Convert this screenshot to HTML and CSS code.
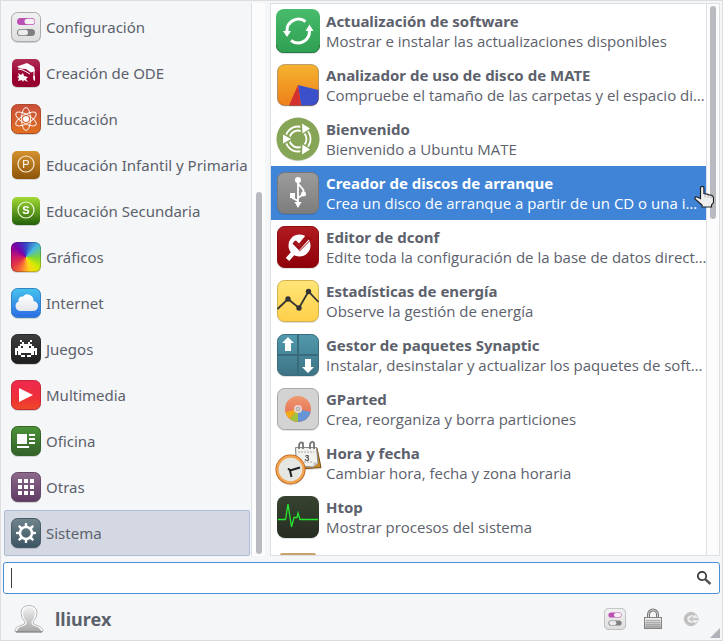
FILE: index.html
```html
<!DOCTYPE html>
<html lang="es">
  <head>
    <meta charset="utf-8" />
    <meta name="viewport" content="width=device-width, initial-scale=1" />
    <title>Menú de aplicaciones</title>
    <link rel="stylesheet" href="styles.css">
  </head>
  <body>
    <div class="menu">
      <!-- shared gradients -->
      <svg class="defs" width="0" height="0" aria-hidden="true">
        <defs>
          <linearGradient id="gGrey" x2="0" y2="1"><stop stop-color="#f1f1f1"/><stop offset="1" stop-color="#dedede"/></linearGradient>
          <linearGradient id="gWine" x2="0" y2="1"><stop stop-color="#b02e56"/><stop offset=".6" stop-color="#98012f"/><stop offset="1" stop-color="#96002d"/></linearGradient>
          <linearGradient id="gOrange" x2="0" y2="1"><stop stop-color="#c94f3c"/><stop offset="1" stop-color="#e0701f"/></linearGradient>
          <linearGradient id="gBrown" x2="0" y2="1"><stop stop-color="#d3912f"/><stop offset="1" stop-color="#8d5409"/></linearGradient>
          <linearGradient id="gLime" x2="0" y2="1"><stop stop-color="#a2da34"/><stop offset="1" stop-color="#22610a"/></linearGradient>
          <linearGradient id="gSky" x2="0" y2="1"><stop stop-color="#45c3ec"/><stop offset="1" stop-color="#2b6be4"/></linearGradient>
          <linearGradient id="gBlack" x2="0" y2="1"><stop stop-color="#3e3e3e"/><stop offset="1" stop-color="#1e1e1e"/></linearGradient>
          <linearGradient id="gRed" x2="0" y2="1"><stop stop-color="#ef284f"/><stop offset=".6" stop-color="#ee3038"/><stop offset="1" stop-color="#ef4a27"/></linearGradient>
          <linearGradient id="gGreen" x2="0" y2="1"><stop stop-color="#4b9338"/><stop offset="1" stop-color="#35602a"/></linearGradient>
          <linearGradient id="gPurple" x2="0" y2="1"><stop stop-color="#8d6b8b"/><stop offset="1" stop-color="#5f3a63"/></linearGradient>
          <linearGradient id="gSlate" x2="0" y2="1"><stop stop-color="#6f838c"/><stop offset="1" stop-color="#3c5563"/></linearGradient>
          <linearGradient id="gUpdate" x2="0" y2="1"><stop stop-color="#48bb6c"/><stop offset="1" stop-color="#2f9f52"/></linearGradient>
          <linearGradient id="gAmber" x2="0" y2="1"><stop stop-color="#f5b32f"/><stop offset="1" stop-color="#ee801a"/></linearGradient>
          <linearGradient id="gUsb" x2="0" y2="1"><stop stop-color="#9c9c9c"/><stop offset="1" stop-color="#7d7d7d"/></linearGradient>
          <linearGradient id="gDconf" x2="0" y2="1"><stop stop-color="#b01b20"/><stop offset="1" stop-color="#8e0008"/></linearGradient>
          <linearGradient id="gYellow" x2="0" y2="1"><stop stop-color="#ffe577"/><stop offset="1" stop-color="#ffcf4a"/></linearGradient>
          <linearGradient id="gTeal" x2="0" y2="1"><stop stop-color="#5199ae"/><stop offset="1" stop-color="#3d7384"/></linearGradient>
          <linearGradient id="gHtop" x2="0" y2="1"><stop stop-color="#37432f"/><stop offset="1" stop-color="#252d21"/></linearGradient>
          <linearGradient id="gCloud" x2="0" y2="1"><stop stop-color="#ffffff"/><stop offset="1" stop-color="#e4e6ea"/></linearGradient>
          <linearGradient id="gMetal" x2="0" y2="1"><stop stop-color="#f2f2f2"/><stop offset="1" stop-color="#a8a8a8"/></linearGradient>
          <linearGradient id="gDisc" x2="0" y2="1"><stop stop-color="#ef9a6e"/><stop offset="1" stop-color="#e2604f"/></linearGradient>
          <symbol id="toggles" viewBox="0 0 30 30">
            <rect x=".5" y=".5" width="29" height="29" rx="6" fill="url(#gGrey)" stroke="#aaa"/>
            <rect x="6" y="6" width="18" height="7" rx="3.5" fill="#bb4fb4"/>
            <rect x="13.5" y="6.8" width="10" height="5.5" rx="2.75" fill="#f4f0f4"/>
            <rect x="6" y="17" width="18" height="7" rx="3.5" fill="#7f7f7f"/>
            <rect x="7" y="17.8" width="10" height="5.5" rx="2.75" fill="#ececec"/>
          </symbol>
        </defs>
      </svg>

      <div class="panels">
        <nav class="categories">
          <button class="category">
            <svg class="category-icon"><use href="#toggles"/></svg>
            Configuración
          </button>
          <button class="category">
            <svg class="category-icon" viewBox="0 0 30 30">
              <rect x="1" y="1" width="28" height="28" rx="5" fill="url(#gWine)"/>
              <path d="M6 8.500 16 5 23 9 24 13 20 14.500 15 11 9 10.500Z" fill="#fff"/>
              <path d="M7 11 12 12 19 16M23 12 23 19" stroke="#fff" fill="none"/>
              <path d="M22 18h2v5l-1.500-1z" fill="#fff"/>
              <path d="M7 15l3 2 2-2 1 3 4 1-2 2 2 3-4-2-1 2-1-2-4 1 1-3-2-1 2-1z" fill="#fff"/>
            </svg>
            Creación de ODE
          </button>
          <button class="category">
            <svg class="category-icon" viewBox="0 0 30 30">
              <rect x=".5" y=".5" width="29" height="29" rx="6" fill="url(#gOrange)" stroke="#b04a26"/>
              <g fill="none" stroke="#fff" stroke-opacity=".9">
                <ellipse cx="15" cy="15" rx="4.500" ry="11.500"/>
                <ellipse cx="15" cy="15" rx="4.500" ry="11.500" transform="rotate(60 15 15)"/>
                <ellipse cx="15" cy="15" rx="4.500" ry="11.500" transform="rotate(120 15 15)"/>
              </g>
              <circle cx="15" cy="15" r="3" fill="#fff"/>
            </svg>
            Educación
          </button>
          <button class="category">
            <svg class="category-icon" viewBox="0 0 30 30">
              <rect x="1" y="1" width="28" height="28" rx="5" fill="url(#gBrown)"/>
              <circle cx="15" cy="14" r="8" fill="none" stroke="#f7ead2" stroke-width="1.200"/>
              <text x="15" y="18" class="badge-letter light">P</text>
            </svg>
            Educación Infantil y Primaria
          </button>
          <button class="category">
            <svg class="category-icon" viewBox="0 0 30 30">
              <rect x="1" y="1" width="28" height="28" rx="5" fill="url(#gLime)"/>
              <circle cx="15" cy="14" r="8" fill="none" stroke="#eef8dc" stroke-width="1.200"/>
              <text x="15" y="18" class="badge-letter">S</text>
            </svg>
            Educación Secundaria
          </button>
          <button class="category">
            <span class="category-icon color-wheel"></span>
            Gráficos
          </button>
          <button class="category">
            <svg class="category-icon" viewBox="0 0 30 30">
              <rect x=".5" y=".5" width="29" height="29" rx="6" fill="url(#gSky)" stroke="#3383c4"/>
              <path d="M9 23a5 5 0 0 1-1.500-9.500A4 4 0 0 1 12 8.500a6 6 0 0 1 10.500 4.500A5 5 0 0 1 21.500 23z" fill="url(#gCloud)"/>
            </svg>
            Internet
          </button>
          <button class="category">
            <svg class="category-icon" viewBox="0 0 30 30">
              <rect x=".5" y=".5" width="29" height="29" rx="6" fill="url(#gBlack)" stroke="#262626"/>
              <path fill="#fff" fill-rule="evenodd" d="M9 6h2v2h-2zM19 6h2v2h-2zM11 8h2v2h4v-2h2v2h2v2h2v2h3v7h-2v-4h-1v4h-3v2h-4v-2h-2v2h-4v-2h-3v-4h-1v4h-2v-7h3v-2h2v-2h2zM10 12v2h2v-2zM18 12v2h2v-2zM10 19v2h10v-2z"/>
            </svg>
            Juegos
          </button>
          <button class="category">
            <svg class="category-icon" viewBox="0 0 30 30">
              <rect x=".5" y=".5" width="29" height="29" rx="6" fill="url(#gRed)" stroke="#c22b36"/>
              <path d="M8 8 22 15 8 22z" fill="#fff"/>
            </svg>
            Multimedia
          </button>
          <button class="category">
            <svg class="category-icon" viewBox="0 0 30 30">
              <rect x=".5" y=".5" width="29" height="29" rx="6" fill="url(#gGreen)" stroke="#336427"/>
              <path d="M6 8h10v10H6zM18 8h6v2h-6zM18 12h6v2h-6zM18 16h6v2h-6zM6 20h12v2H6z" fill="#fff"/>
            </svg>
            Oficina
          </button>
          <button class="category">
            <svg class="category-icon" viewBox="0 0 30 30">
              <rect x=".5" y=".5" width="29" height="29" rx="6" fill="url(#gPurple)" stroke="#654667"/>
              <path d="M7 7h4v4H7zM13 7h4v4h-4zM19 7h4v4h-4zM7 13h4v4H7zM13 13h4v4h-4zM19 13h4v4h-4zM7 19h4v4H7zM13 19h4v4h-4zM19 19h4v4h-4z" fill="#fff"/>
            </svg>
            Otras
          </button>
          <button class="category selected">
            <svg class="category-icon" viewBox="0 0 30 30">
              <rect x=".5" y=".5" width="29" height="29" rx="6" fill="url(#gSlate)" stroke="#465b66"/>
              <circle cx="15" cy="15" r="6" fill="none" stroke="#fff" stroke-width="2.500"/>
              <path fill="#fff" d="M13.500 9 14 5h2l.5 4zM13.500 21l.5 4h2l.5-4zM9 13.500 5 14v2l4 .5zM21 13.500l4 .5v2l-4 .5zM9.500 11.600 7 8.400 8.400 7l3.200 2.500zM18.400 9.500 21.600 7 23 8.400l-2.500 3.200zM9.500 18.400 7 21.600 8.400 23l3.200-2.500zM20.500 18.400l2.500 3.200-1.400 1.400-3.200-2.500z"/>
            </svg>
            Sistema
          </button>
        </nav>
        <div class="scrollbar scrollbar-left"><div class="thumb"></div></div>

        <div class="app-list">
          <div class="apps">
            <button class="app">
              <svg class="app-icon" viewBox="0 0 48 48">
                <rect x="2" y="2" width="44" height="44" rx="8" fill="url(#gUpdate)"/>
                <path d="M2.500 38v1a7 7 0 0 0 7 6.500h29a7 7 0 0 0 7-6.500v-1" fill="none" stroke="#267a41"/>
                <path d="M13 24A11.500 11.500 0 0 1 31.500 14.500M35.500 24A11.500 11.500 0 0 1 17 33.500" fill="none" stroke="#fff" stroke-width="3"/>
                <path d="M9 24h8l-4 6zM31.500 24l4-6.500 4 6.500z" fill="#fff"/>
              </svg>
              <span class="app-text"><strong>Actualización de software</strong><span>Mostrar e instalar las actualizaciones disponibles</span></span>
            </button>
            <button class="app">
              <svg class="app-icon" viewBox="0 0 48 48">
                <rect x="3.500" y="3.500" width="41" height="41" rx="7" fill="url(#gAmber)"/>
                <path d="M24 24 44.500 29V38q-1 6-7 6.500H27z" fill="#3c50cc"/>
                <path d="M24 24 15 44.500H27z" fill="#d43030"/>
                <rect x="3.500" y="3.500" width="41" height="41" rx="7" fill="none" stroke="#000" stroke-opacity=".25"/>
              </svg>
              <span class="app-text"><strong>Analizador de uso de disco de MATE</strong><span>Compruebe el tamaño de las carpetas y el espacio di…</span></span>
            </button>
            <button class="app">
              <svg class="app-icon" viewBox="0 0 48 48">
                <circle cx="24" cy="24" r="21.500" fill="#87a556"/>
                <g fill="none" stroke="#fff" stroke-width="1.800">
                  <circle cx="24" cy="24" r="12.500"/>
                  <circle cx="24" cy="24" r="8.500"/>
                </g>
                <path d="M8.500 17.500 20.500 24 8.500 30.500zM26 7 38 13.500 27 21zM26 41 38 34.500 27 27z" fill="#87a556"/>
                <path d="M28 8.500 36 13.500 28.500 18.500zM9 19.500 17 24 9 28.500zM28 39.500 36 34.500 28.500 29.500z" fill="#fff"/>
              </svg>
              <span class="app-text"><strong>Bienvenido</strong><span>Bienvenido a Ubuntu MATE</span></span>
            </button>
            <button class="app selected">
              <svg class="app-icon" viewBox="0 0 48 48">
                <rect x="3.500" y="3.500" width="41" height="41" rx="7" fill="url(#gUsb)" stroke="#777"/>
                <path d="M24 11v24M24 32l-5.500-3v-4M24 29l5.500-4v-4l-5-6" fill="none" stroke="#fff" stroke-width="1.800"/>
                <circle cx="24" cy="11" r="3" fill="#fff"/>
                <path d="M16 24h5v5h-5zM20.500 33h7L24 39z" fill="#fff"/>
                <circle cx="29.500" cy="25" r="2.500" fill="#fff"/>
              </svg>
              <span class="app-text"><strong>Creador de discos de arranque</strong><span>Crea un disco de arranque a partir de un CD o una i…</span></span>
            </button>
            <button class="app">
              <svg class="app-icon" viewBox="0 0 48 48">
                <rect x="3.500" y="3.500" width="41" height="41" rx="7" fill="url(#gDconf)" stroke="#8b0d12"/>
                <circle cx="25.500" cy="22.500" r="11" fill="#fff"/>
                <path d="M20 29 13.500 36.500" stroke="#fff" stroke-width="4.500"/>
                <path d="M18 19 22 17.500 25 20.500 32 12 38 16 25.500 28.500z" fill="#9d0d13"/>
                <path d="M16 20.500 19 17.500 25 23 33 14.500 35.500 17.500 25 28z" fill="#fff"/>
                <path d="M19.500 19.500 25 25 34.500 14.500" fill="none" stroke="#9d0d13" stroke-width="3"/>
              </svg>
              <span class="app-text"><strong>Editor de dconf</strong><span>Edite toda la configuración de la base de datos direct…</span></span>
            </button>
            <button class="app">
              <svg class="app-icon" viewBox="0 0 48 48">
                <rect x="3.500" y="3.500" width="41" height="41" rx="7" fill="url(#gYellow)" stroke="#d3b04a"/>
                <path d="M3.500 32 14 22 25 31 34.500 14.500 44.500 25" fill="none" stroke="#333" stroke-width="1.800"/>
                <g fill="#333"><circle cx="14" cy="22" r="2.700"/><circle cx="25" cy="31" r="2.700"/><circle cx="34.500" cy="14.500" r="2.700"/></g>
              </svg>
              <span class="app-text"><strong>Estadísticas de energía</strong><span>Observe la gestión de energía</span></span>
            </button>
            <button class="app">
              <svg class="app-icon" viewBox="0 0 48 48">
                <rect x="3.500" y="3.500" width="41" height="41" rx="7" fill="url(#gTeal)" stroke="#3a6d7c"/>
                <path d="M24 4v40M4 24h40" stroke="#396c7b" stroke-width="2"/>
                <path d="M14 6 20 12h-3v8h-6v-8H8zM31 28h6v8h3l-6 6-6-6h3z" fill="#fff"/>
              </svg>
              <span class="app-text"><strong>Gestor de paquetes Synaptic</strong><span>Instalar, desinstalar y actualizar los paquetes de soft…</span></span>
            </button>
            <button class="app">
              <svg class="app-icon" viewBox="0 0 48 48">
                <rect x="3.500" y="3.500" width="41" height="41" rx="7" fill="#d3d3d3" stroke="#a9a9a9"/>
                <circle cx="24" cy="24" r="13" fill="url(#gDisc)"/>
                <path d="M24 24 36.700 27A13 13 0 0 1 24 37z" fill="#6694d6"/>
                <path d="M24 24V37A13 13 0 0 1 15.500 34z" fill="#a3c23e"/>
                <path d="M24 24 15.500 34A13 13 0 0 1 11.400 27z" fill="#f0ac18"/>
                <circle cx="24" cy="24" r="3" fill="#d1d1d1" stroke="#f1d5cf" stroke-width="2"/>
                <circle cx="24" cy="24" r="2" fill="#ccc" stroke="#a49b9b" stroke-width=".7"/>
              </svg>
              <span class="app-text"><strong>GParted</strong><span>Crea, reorganiza y borra particiones</span></span>
            </button>
            <button class="app">
              <svg class="app-icon" viewBox="0 0 48 48">
                <path d="M22 10 43 9 47 28.500 26 30z" fill="#c98a28" stroke="#7a5018"/>
                <path d="M21.500 8.500H42.500L44 24 39 28 22.500 27z" fill="#f1f1ee" stroke="#888"/>
                <path d="M39 28 39.500 23 44 24z" fill="#ccc"/>
                <path d="M24 13h16M24 23h14" stroke="#aaa" stroke-dasharray="2 1"/>
                <path d="M25 10V6q1-4 4-2v6M36 10V5q2-4 4-1v6" fill="none" stroke="#777" stroke-width="1.800"/>
                <text x="33" y="22" class="calendar-day">3</text>
                <circle cx="16.500" cy="30.500" r="13" fill="#fff" stroke="#b85d16" stroke-width="4"/>
                <circle cx="16.500" cy="30.500" r="13" fill="#e5e7e2" stroke="#f3a451" stroke-width="2.400"/>
                <path d="M16 31.500 26 28.500M16 31.500 17.500 38M14 29.500 17 32" stroke="#222" stroke-width="2"/>
              </svg>
              <span class="app-text"><strong>Hora y fecha</strong><span>Cambiar hora, fecha y zona horaria</span></span>
            </button>
            <button class="app">
              <svg class="app-icon" viewBox="0 0 48 48">
                <rect x="3" y="3" width="42" height="42" rx="8" fill="url(#gHtop)"/>
                <path d="M4 26.500H11.500L14 11 17.500 34 20 24.500H23L24 20 26 26.500H44" fill="none" stroke="#27e530" stroke-width="1.300"/>
              </svg>
              <span class="app-text"><strong>Htop</strong><span>Mostrar procesos del sistema</span></span>
            </button>
            <div class="app next-app">
              <svg class="app-icon" viewBox="0 0 48 48"><rect x="6" y="6" width="36" height="37" rx="2" fill="#c9a26c"/></svg>
            </div>
          </div>
          <div class="scrollbar scrollbar-right"><div class="thumb"></div></div>
        </div>

        <svg class="pointer" viewBox="0 0 20 22" aria-hidden="true">
          <path d="M6.500 13V2.500a1.700 1.700 0 0 1 3.400 0V8l1.500.5 2 .2 1.500.7 2 .2 1.600.9 1 1.500V17l-2 2.500V21.500H8V19.500L1 13.500q-.5-2.500 2-2z" fill="#eee" stroke="#222" stroke-width="1.200"/>
          <path d="M11 9v3M14 9.500v3M17 10v3" stroke="#999" stroke-width=".7"/>
        </svg>
      </div>

      <div class="search">
        <input type="text" class="search-input" aria-label="Buscar" />
        <span class="caret"></span>
        <svg class="search-icon" viewBox="0 0 16 16" aria-hidden="true">
          <circle cx="6" cy="6" r="4.200" fill="none" stroke="#333" stroke-width="1.700"/>
          <path d="M9 9 14.500 14" stroke="#555" stroke-width="2.400"/>
        </svg>
      </div>

      <div class="footer">
        <button class="user">
          <svg class="avatar" viewBox="0 0 30 30">
            <path d="M1 27.500q0-4.500 6-6 4.500-1 4-3.500Q7 14 7 8.500 7.500 2 15 1.500 22.500 2 23 8.500 23 14 19 18q-.5 2.500 4 3.500 6 1.500 6 6z" fill="#fff" stroke="#b5b5b5"/>
            <path d="M3 27q.5-3 5-4.500 5-1 4.500-5Q9 14 9 8.500 9.500 3.500 15 3q5.500.5 6 5.500 0 5.500-3.500 9-.5 4 4.500 5 4.500 1.500 5 4.500z" fill="url(#gMetal)"/>
            <path d="M2 28h26" stroke="#666"/>
          </svg>
          lliurex
        </button>
        <div class="actions">
          <button class="action" aria-label="Configuración del sistema">
            <svg class="action-icon"><use href="#toggles"/></svg>
          </button>
          <button class="action" aria-label="Bloquear">
            <svg class="action-icon" viewBox="0 0 22 22">
              <path d="M6.500 10V6.500a4.500 4.500 0 0 1 9 0V10" fill="none" stroke="#777" stroke-width="3"/>
              <path d="M6.500 10V6.500a4.500 4.500 0 0 1 9 0V10" fill="none" stroke="#ddd"/>
              <rect x="2.500" y="9.500" width="17" height="11" fill="url(#gMetal)" stroke="#838383"/>
              <path d="M4 12.500h14M4 14.500h14M4 16.500h14M4 18.500h14" stroke="#969696" stroke-width=".7"/>
            </svg>
          </button>
          <button class="action" aria-label="Salir">
            <svg class="action-icon" viewBox="0 0 22 22">
              <circle cx="11" cy="11" r="6.800" fill="#ededed" stroke="#c2c2c2"/>
              <path d="M14.500 7.500A5 5 0 1 0 14.500 14.500" fill="none" stroke="#bcbcbc" stroke-width="2.500"/>
              <path d="M8 11 13 7V9.500H19V12.500H13V15z" fill="#c6c6c6" stroke="#f1f1f1" stroke-width=".8"/>
            </svg>
          </button>
        </div>
        <span class="grip"></span>
      </div>
    </div>
  </body>
</html>
```
FILE: styles.css
```css
* {
  margin: 0;
  padding: 0;
  box-sizing: border-box;
}

body {
  font-family: 'Noto Sans', 'Open Sans', sans-serif;
  font-size: 15px;
  line-height: 20px;
  color: #5c616c;
  background: #f4f6f8;
}

button {
  font: inherit;
  color: inherit;
  background: none;
  border: none;
  text-align: left;
  cursor: pointer;
}

.defs {
  position: absolute;
}

.menu {
  display: flex;
  flex-direction: column;
  height: 100vh;
  border: 1px solid #dcdddf;
}

.panels {
  position: relative;
  display: flex;
  flex: 1;
  min-height: 0;
  margin: 2px 2px 6px;
}

/* categories */

.categories {
  width: 249px;
  flex-shrink: 0;
  padding: 1px 1px 0;
  border-right: 1px solid #dcdfe3;
  overflow: hidden;
}

.category {
  display: flex;
  align-items: center;
  gap: 5px;
  width: 100%;
  height: 46px;
  padding: 0 6px;
  border: 1px solid transparent;
  border-radius: 2px;
  white-space: nowrap;
}

.category.selected {
  background: #d4d8e3;
  border-color: #b0bdd6;
}

.category-icon {
  width: 30px;
  height: 30px;
  flex-shrink: 0;
  filter: drop-shadow(0 1px 0 rgba(0, 0, 0, 0.15));
}

.color-wheel {
  border-radius: 6px;
  border: 1px solid rgba(0, 0, 0, 0.2);
  background: conic-gradient(#3346c8, #48b8dc 45deg, #76d73c 90deg, #d9e900 135deg, #ffd21c 165deg, #f97835 200deg, #e33645 235deg, #cc1a6c 270deg, #7a00a8 315deg, #3346c8);
  background-origin: border-box;
}

.badge-letter {
  font: bold 11px 'Liberation Sans', sans-serif;
  fill: #fff;
  text-anchor: middle;
}

.badge-letter.light {
  font-weight: normal;
}

/* scrollbars */

.scrollbar {
  display: flex;
  flex-direction: column;
  align-items: center;
  width: 13px;
  flex-shrink: 0;
  padding: 2px 0;
  background: #fcfcfc;
}

.scrollbar-left {
  justify-content: flex-end;
  margin-right: 5px;
}

.scrollbar-right {
  border-left: 1px solid #dcdfe3;
}

.thumb {
  width: 6px;
  border-radius: 3px;
  background: #b8babf;
}

.scrollbar-left .thumb {
  height: 66%;
}

.scrollbar-right .thumb {
  height: 39%;
}

/* applications */

.app-list {
  display: flex;
  flex: 1;
  min-width: 0;
  border: 1px solid #dcdfe3;
  background: #fff;
}

.apps {
  flex: 1;
  min-width: 0;
  overflow: hidden;
}

.app {
  display: flex;
  align-items: center;
  gap: 4px;
  width: 100%;
  height: 54px;
  padding: 0 3px;
}

.app.selected {
  background: #3f84d7;
  color: #fff;
}

.app-icon {
  width: 48px;
  height: 48px;
  flex-shrink: 0;
  filter: drop-shadow(0 1px 0 rgba(0, 0, 0, 0.12));
}

.app-text {
  display: flex;
  flex-direction: column;
  min-width: 0;
  white-space: nowrap;
}

.app-text span {
  font-family: 'Open Sans', 'Noto Sans', sans-serif;
}

.calendar-day {
  font: bold 9px 'Liberation Sans', sans-serif;
  fill: #555;
  text-anchor: middle;
}

.pointer {
  position: absolute;
  right: 6px;
  top: 182px;
  width: 20px;
  height: 23px;
}

/* search */

.search {
  position: relative;
  margin: 0 2px;
}

.search-input {
  display: block;
  width: 100%;
  height: 32px;
  padding: 0 32px 0 8px;
  font: inherit;
  color: inherit;
  background: #fff;
  border: 1px solid #4a90d9;
  border-radius: 3px;
  outline: none;
}

.caret {
  position: absolute;
  left: 8px;
  top: 6px;
  width: 1px;
  height: 20px;
  background: #3b3e45;
}

.search-icon {
  position: absolute;
  right: 8px;
  top: 8px;
  width: 16px;
  height: 16px;
}

/* footer */

.footer {
  position: relative;
  display: flex;
  align-items: center;
  justify-content: space-between;
  height: 46px;
  padding: 4px 20px 0 13px;
}

.user {
  display: flex;
  align-items: center;
  gap: 11px;
  font-size: 18px;
  font-weight: bold;
}

.avatar {
  width: 30px;
  height: 30px;
}

.actions {
  display: flex;
  gap: 16px;
}

.action {
  display: flex;
}

.action-icon {
  width: 22px;
  height: 22px;
}

.grip {
  position: absolute;
  right: 2px;
  bottom: 2px;
  border-left: 10px solid transparent;
  border-bottom: 10px solid #b0b2b9;
}
```
